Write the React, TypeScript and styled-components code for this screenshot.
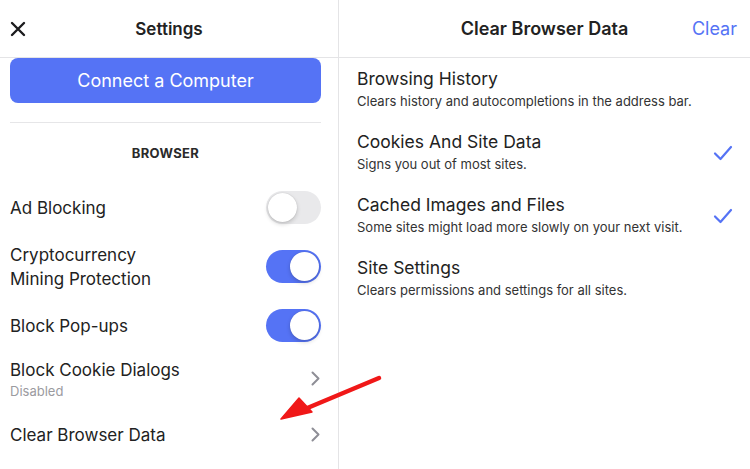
import { FC } from 'react'
import styled, { createGlobalStyle } from 'styled-components'

const Global = createGlobalStyle`
  html, body { margin: 0; padding: 0; background: #fff; }
  body { font-family: Inter, "Open Sans", "Liberation Sans", sans-serif; color: #1c1c1e; }
`

const BLUE = '#5573f5'

const Page = styled.div`
  position: relative;
  display: flex;
  width: 750px;
  height: 469px;
  overflow: hidden;
  background: #fff;
`

const LeftPane = styled.div`
  width: 338px;
  flex: none;
  border-right: 1px solid #e4e4e6;
  display: flex;
  flex-direction: column;
`

const RightPane = styled.div`
  flex: 1;
  display: flex;
  flex-direction: column;
`

const Header = styled.div`
  height: 57px;
  flex: none;
  border-bottom: 1px solid #e4e4e6;
  display: grid;
  grid-template-columns: 80px 1fr 80px;
  align-items: center;
`

const Title = styled.div<{ $size: number }>`
  text-align: center;
  font-size: ${(p) => p.$size}px;
  font-weight: 600;
  color: #222;
`

const CloseBtn = styled.div`
  padding-left: 10px;
  display: flex;
  align-items: center;
  height: 100%;
`

const HeaderAction = styled.div`
  text-align: right;
  padding-right: 13px;
  font-size: 18px;
  color: ${BLUE};
`

const LeftBody = styled.div`
  padding: 0 17px 0 10px;
  display: flex;
  flex-direction: column;
`

const ConnectButton = styled.div`
  height: 45px;
  border-radius: 8px;
  background: ${BLUE};
  color: #fff;
  font-size: 18px;
  display: flex;
  align-items: center;
  justify-content: center;
`

const Divider = styled.div`
  height: 1px;
  background: #e6e6e8;
  margin-top: 19px;
`

const SectionLabel = styled.div`
  box-sizing: border-box;
  height: 55px;
  padding-top: 4px;
  display: flex;
  align-items: center;
  justify-content: center;
  font-size: 13px;
  font-weight: 700;
  letter-spacing: 0.3px;
  color: #2a2a2a;
`

const Row = styled.div<{ $h: number }>`
  height: ${(p) => p.$h}px;
  display: flex;
  align-items: center;
  justify-content: space-between;
`

const RowText = styled.div`
  display: flex;
  flex-direction: column;
`

const RowLabel = styled.div`
  font-size: 17px;
  line-height: 24px;
  color: #222;
`

const RowSub = styled.div`
  font-size: 13px;
  line-height: 18px;
  color: #9b9b9f;
`

const Toggle = styled.div<{ $on: boolean }>`
  width: 55px;
  height: 33px;
  box-sizing: border-box;
  border-radius: 17px;
  background: ${(p) => (p.$on ? BLUE : '#e9e9eb')};
  position: relative;
  flex: none;
`

const Knob = styled.div<{ $on: boolean }>`
  position: absolute;
  top: 2px;
  left: ${(p) => (p.$on ? '24px' : '2px')};
  width: 29px;
  height: 29px;
  border-radius: 50%;
  background: #fff;
  box-shadow: 0 2px 4px rgba(0, 0, 0, 0.18), 0 0 1px rgba(0, 0, 0, 0.2);
`

const Chevron = styled.svg`
  flex: none;
  margin-right: 1px;
`

const List = styled.div`
  display: flex;
  flex-direction: column;
  padding: 0 17px 0 18px;
`

const Item = styled.div`
  height: 63px;
  display: flex;
  align-items: center;
  justify-content: space-between;
`

const ItemTitle = styled.div`
  font-size: 17.5px;
  line-height: 20px;
  color: #222;
`

const ItemSub = styled.div`
  font-size: 13px;
  line-height: 18px;
  margin-top: 3px;
  color: #333;
`

const Overlay = styled.svg`
  position: absolute;
  left: 0;
  top: 0;
  pointer-events: none;
`

const Switch: FC<{ on: boolean }> = ({ on }) => (
  <Toggle $on={on}>
    <Knob $on={on} />
  </Toggle>
)

const ChevronIcon = () => (
  <Chevron width="9" height="15" viewBox="0 0 9 15">
    <path d="M1.5 1.5 L7.5 7.5 L1.5 13.5" fill="none" stroke="#8e8e96" strokeWidth="2" strokeLinecap="round" strokeLinejoin="round" />
  </Chevron>
)

const Check = () => (
  <svg width="20" height="16" viewBox="0 0 20 16">
    <path d="M2 8.5 L7.5 14 L18 2" fill="none" stroke={BLUE} strokeWidth="2.2" strokeLinecap="round" strokeLinejoin="round" />
  </svg>
)

const items = [
  { title: 'Browsing History', sub: 'Clears history and autocompletions in the address bar.', checked: false },
  { title: 'Cookies And Site Data', sub: 'Signs you out of most sites.', checked: true },
  { title: 'Cached Images and Files', sub: 'Some sites might load more slowly on your next visit.', checked: true },
  { title: 'Site Settings', sub: 'Clears permissions and settings for all sites.', checked: false },
]

const App: FC = () => (
  <>
    <Global />
    <Page>
      <LeftPane>
        <Header>
          <CloseBtn>
            <svg width="16" height="16" viewBox="0 0 16 16">
              <path d="M2 2 L14 14 M14 2 L2 14" stroke="#1c1c1e" strokeWidth="2.4" strokeLinecap="round" />
            </svg>
          </CloseBtn>
          <Title $size={17}>Settings</Title>
          <div />
        </Header>
        <LeftBody>
          <ConnectButton>Connect a Computer</ConnectButton>
          <Divider />
          <SectionLabel>BROWSER</SectionLabel>
          <Row $h={59}>
            <RowLabel>Ad Blocking</RowLabel>
            <Switch on={false} />
          </Row>
          <Row $h={59}>
            <RowLabel>
              Cryptocurrency
              <br />
              Mining Protection
            </RowLabel>
            <Switch on />
          </Row>
          <Row $h={59}>
            <RowLabel>Block Pop-ups</RowLabel>
            <Switch on />
          </Row>
          <Row $h={47}>
            <RowText>
              <RowLabel>Block Cookie Dialogs</RowLabel>
              <RowSub>Disabled</RowSub>
            </RowText>
            <ChevronIcon />
          </Row>
          <Row $h={65}>
            <RowLabel>Clear Browser Data</RowLabel>
            <ChevronIcon />
          </Row>
        </LeftBody>
      </LeftPane>
      <RightPane>
        <Header>
          <div />
          <Title $size={18}>Clear Browser Data</Title>
          <HeaderAction>Clear</HeaderAction>
        </Header>
        <List>
          {items.map((it) => (
            <Item key={it.title}>
              <div>
                <ItemTitle>{it.title}</ItemTitle>
                <ItemSub>{it.sub}</ItemSub>
              </div>
              {it.checked && <Check />}
            </Item>
          ))}
        </List>
      </RightPane>
      <Overlay width="750" height="469" viewBox="0 0 750 469">
        <path d="M379 378 L305 409" stroke="#f01818" strokeWidth="4.5" strokeLinecap="round" />
        <path d="M281 419 L299 398 L312 412 Z" fill="#f01818" stroke="#f01818" strokeWidth="1.5" strokeLinejoin="round" />
      </Overlay>
    </Page>
  </>
)

export default App
